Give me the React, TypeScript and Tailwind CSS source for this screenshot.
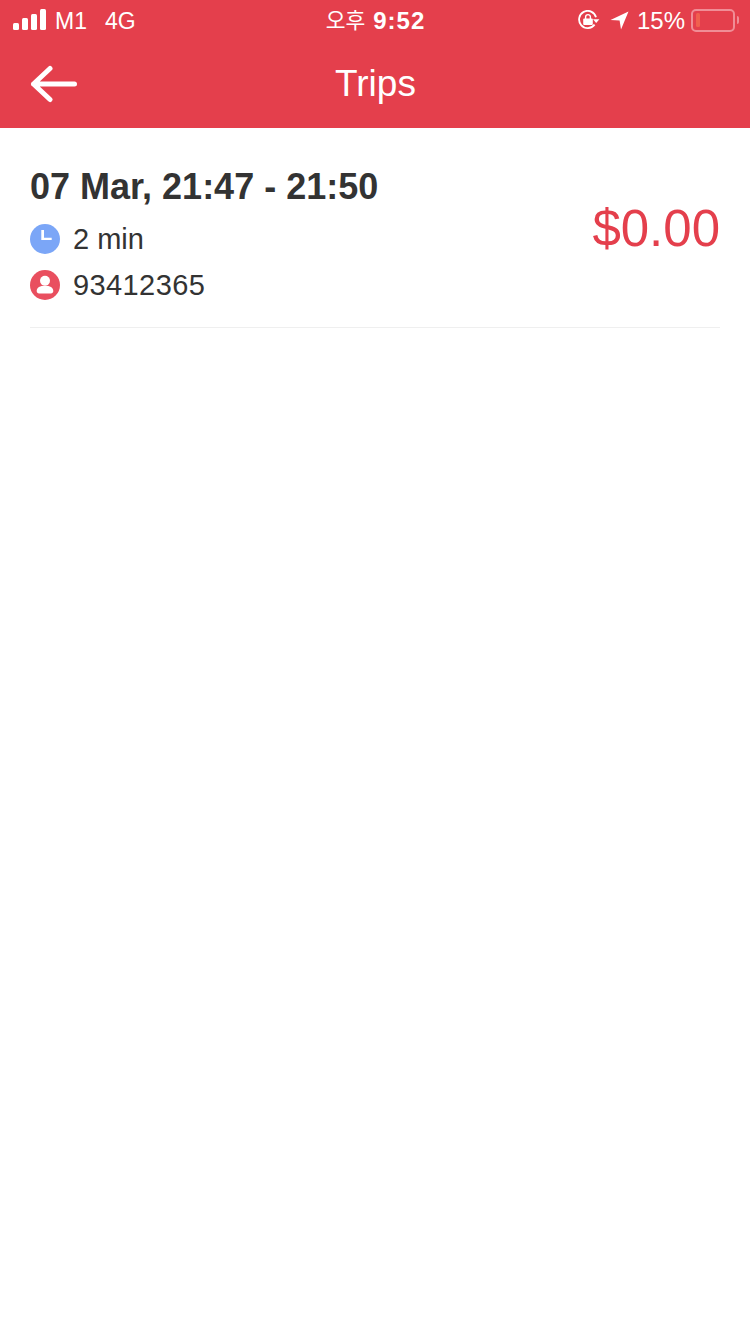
const FONT = "font-['Liberation_Sans',Arial,sans-serif]";

function SignalBars() {
  return (
    <div className="mb-[1px] flex items-end gap-[3px]">
      <div className="h-[7px] w-[6px] rounded-[1.5px] bg-white" />
      <div className="h-[12px] w-[6px] rounded-[1.5px] bg-white" />
      <div className="h-[16px] w-[6px] rounded-[1.5px] bg-white" />
      <div className="h-[21px] w-[6px] rounded-[1.5px] bg-white" />
    </div>
  );
}

function OrientationLock() {
  return (
    <svg width="22" height="20" viewBox="0 0 22 20" className="block">
      <path d="M16.6 14.6A8.6 8.6 0 1 1 18 7.2" fill="none" stroke="white" strokeWidth="1.8" />
      <path d="M15 9.2h6.4l-3.2 3.8z" fill="white" />
      <rect x="5.2" y="8.4" width="9.6" height="6.6" rx="1" fill="white" />
      <path d="M7.6 9V7a2.4 2.4 0 0 1 4.8 0V9" fill="none" stroke="white" strokeWidth="1.4" />
    </svg>
  );
}

function LocationArrow() {
  return (
    <svg width="19" height="19" viewBox="0 0 19 19" className="block">
      <path d="M18.5 0.5L11 18.5L9.6 9.6L0.5 9z" fill="white" />
    </svg>
  );
}

function Battery() {
  return (
    <div className="flex items-center gap-[2px]">
      <div className="flex h-[23px] w-[44px] items-center rounded-[5px] border-2 border-[#f08d96] px-[3px]">
        <div className="h-[14px] w-[4px] rounded-[1.5px] bg-[#f0604e]" />
      </div>
      <div className="h-[8px] w-[2px] rounded-r-[2px] bg-[#f08d96]" />
    </div>
  );
}

function ClockIcon() {
  return (
    <svg width="30" height="30" viewBox="0 0 30 30" className="block shrink-0">
      <circle cx="15" cy="15" r="15" fill="#7ba6f7" />
      <path d="M11.3 6H14v7.7h7.7v2.4H11.3z" fill="white" />
    </svg>
  );
}

function PersonIcon() {
  return (
    <svg width="30" height="30" viewBox="0 0 30 30" className="block shrink-0">
      <circle cx="15" cy="15" r="15" fill="#e94f5f" />
      <circle cx="15" cy="10.7" r="5" fill="white" />
      <path d="M6.7 21c0-3.4 3.4-5.2 8.3-5.2s8.3 1.8 8.3 5.2c0 1.4-1 2.4-2.4 2.4H9.1c-1.4 0-2.4-1-2.4-2.4z" fill="white" />
    </svg>
  );
}

export default function App() {
  return (
    <div className={`${FONT} min-h-[1334px] w-[750px] bg-white`}>
      <header className="bg-[#e43f4c] text-white">
        <div className="relative flex h-[40px] items-center justify-between pl-[13px] pr-[11px]">
          <div className="flex items-center">
            <SignalBars />
            <span className="ml-[9px] mt-[3px] text-[23px] leading-none">M1</span>
            <span className="ml-[18px] mt-[3px] text-[23px] leading-none">4G</span>
          </div>
          <div className="absolute left-0 right-0 top-[6px] flex items-center justify-center gap-[8px] pl-[1px] font-['Liberation_Sans','Noto_Sans_CJK_KR',sans-serif] leading-[30px]">
            <span className="text-[21.5px]">오후</span>
            <span className="text-[24px] font-bold tracking-[1px]">9:52</span>
          </div>
          <div className="flex items-center">
            <OrientationLock />
            <div className="ml-[10px]">
              <LocationArrow />
            </div>
            <span className="ml-[8px] mt-[2px] text-[24px] leading-none">15%</span>
            <div className="ml-[6px]">
              <Battery />
            </div>
          </div>
        </div>
        <div className="relative flex h-[88px] items-center justify-center">
          <svg width="48" height="38" viewBox="0 0 48 38" className="absolute left-[30px] top-[25px] block">
            <path d="M20 3.5L3.5 19L20 34.5M3.5 19H44.5" fill="none" stroke="white" strokeWidth="5" strokeLinecap="round" strokeLinejoin="round" />
          </svg>
          <h1 className="pb-[1px] pl-[1px] text-[37px] font-normal leading-none">Trips</h1>
        </div>
      </header>

      <main className="px-[30px]">
        <div className="flex items-center justify-between border-b border-[#efefef] pb-[24px] pt-[37px]">
          <div>
            <div className="text-[36px] font-bold leading-[44px] text-[#333333]">07 Mar, 21:47 - 21:50</div>
            <div className="mt-[12px] flex items-center gap-[13px]">
              <ClockIcon />
              <span className="text-[29px] leading-[36px] text-[#333333]">2 min</span>
            </div>
            <div className="mt-[10px] flex items-center gap-[13px]">
              <PersonIcon />
              <span className="text-[29px] leading-[36px] tracking-[0.4px] text-[#333333]">93412365</span>
            </div>
          </div>
          <div className="pb-[12px] text-[51px] leading-none text-[#e43f4c]">$0.00</div>
        </div>
      </main>
    </div>
  );
}
